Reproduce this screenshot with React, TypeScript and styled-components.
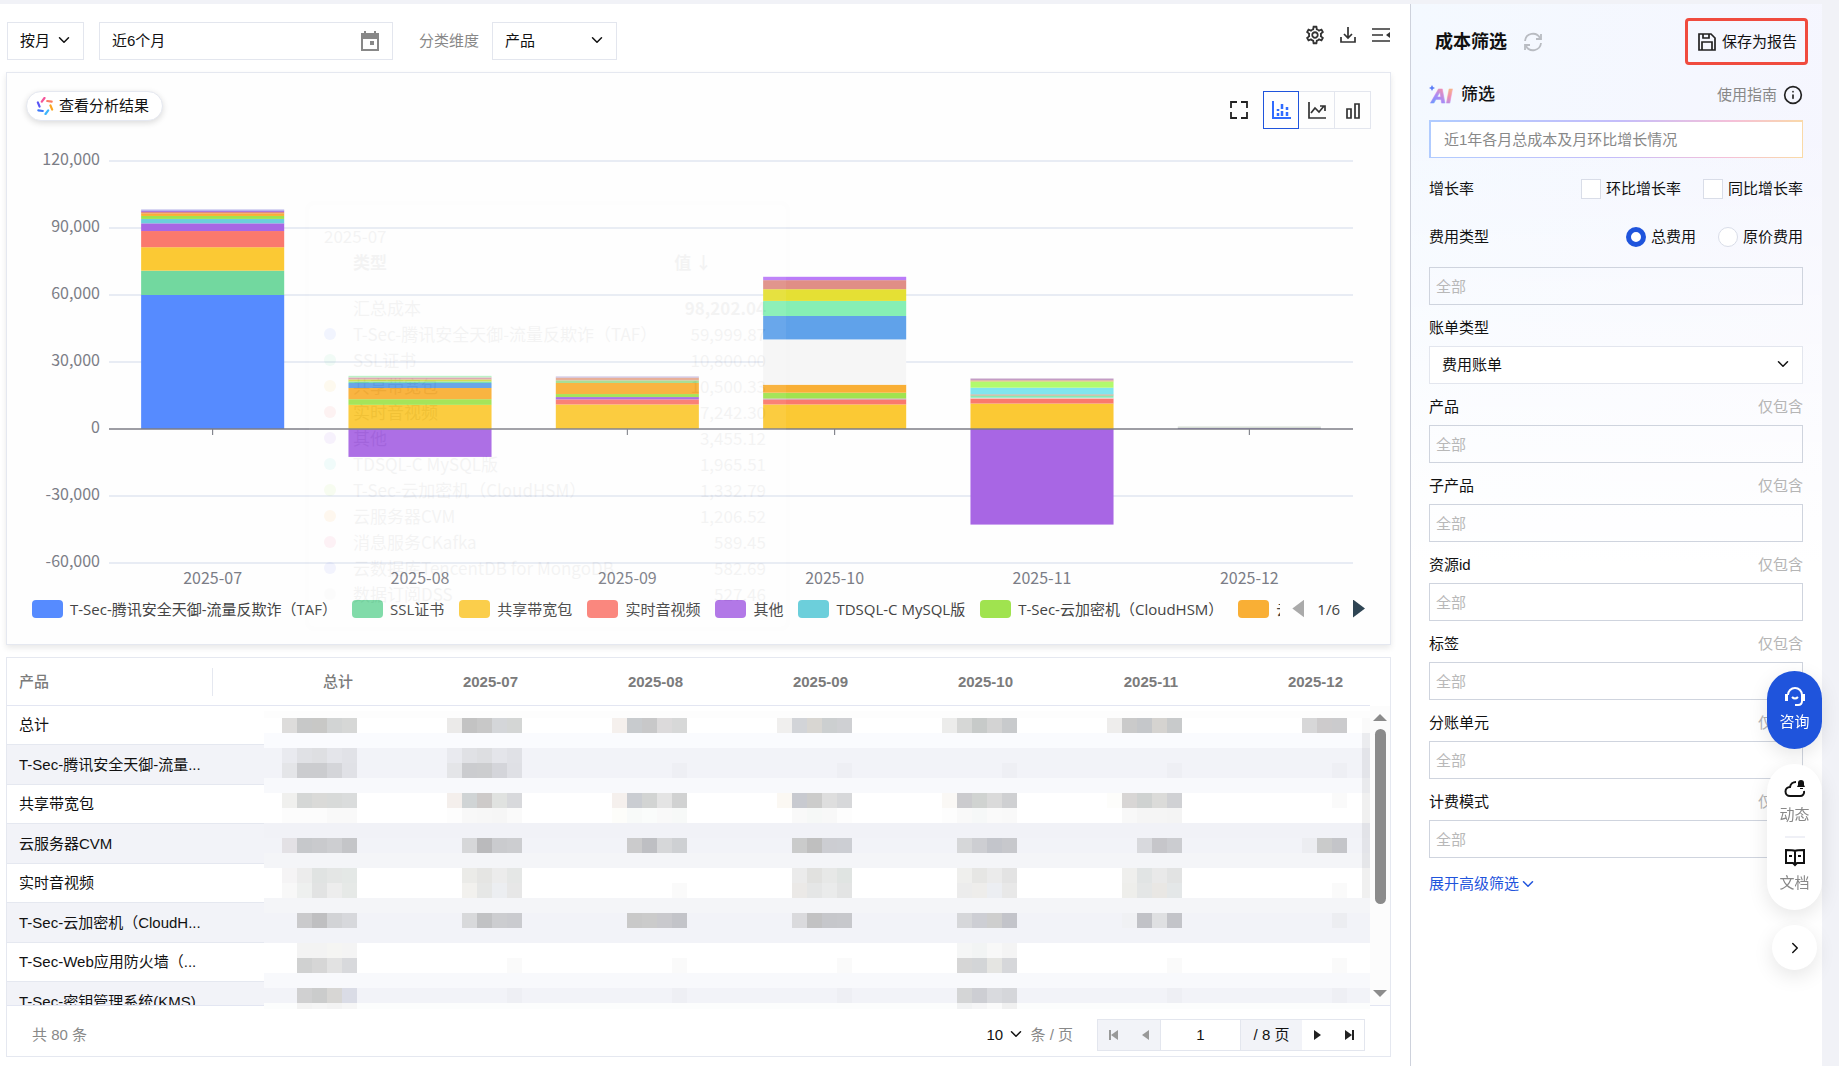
import React from "react";
import styled, { createGlobalStyle, css } from "styled-components";
import { ChevronDown, ChevronRight, Info } from "lucide-react";
import { MdOutlineSettings } from "react-icons/md";

const GlobalStyle = createGlobalStyle`
  *, *::before, *::after { box-sizing: border-box; }
  html, body { margin: 0; }
  body {
    background: #f1f2f7;
    color: #111;
    font: 15px/20px "Liberation Sans", "Noto Sans CJK SC", sans-serif;
  }
  button, input, select { font: inherit; color: inherit; margin: 0; }
  button { cursor: pointer; }
`;

const CHART_FONT = '"Noto Sans CJK SC", sans-serif';

/* ---------- page frame ---------- */

const Page = styled.div`
  display: grid;
  grid-template-columns: minmax(0, 1fr) 412px;
  min-height: 100vh;
  padding: 4px 17px 0 0;
`;

const Main = styled.main`
  display: flex;
  flex-direction: column;
  gap: 12px;
  padding: 18px 19px 10px 6px;
  background: #fff;
`;

const Toolbar = styled.div`
  display: flex;
  align-items: center;
  height: 38px;
  padding-left: 1px;
`;

const SelectBox = styled.div<{ $width?: string; $plain?: boolean }>`
  position: relative;
  width: ${(p) => p.$width ?? "100%"};
  color: #111;
  background: ${(p) => (p.$plain ? "transparent" : "#fff")};
  border: ${(p) => (p.$plain ? "0" : "1px solid #e3e6ee")};

  select {
    display: block;
    width: 100%;
    height: ${(p) => (p.$plain ? "32px" : "36px")};
    padding: 0 ${(p) => (p.$plain ? "0" : "12px")};
    border: 0;
    background: transparent;
    appearance: none;
  }
  svg {
    position: absolute;
    top: 50%;
    right: ${(p) => (p.$plain ? "0" : "10px")};
    margin-top: -10px;
    pointer-events: none;
  }
`;

const DateBox = styled.label`
  display: flex;
  align-items: center;
  width: 294px;
  height: 38px;
  margin-left: 15px;
  padding: 0 12px;
  border: 1px solid #e3e6ee;

  input {
    flex: 1;
    min-width: 0;
    padding: 0;
    border: 0;
    outline: 0;
    background: transparent;
  }
`;

const ToolbarLabel = styled.label`
  margin: 0 13px 0 26px;
  color: #888;
`;

const ToolbarActions = styled.div`
  display: flex;
  gap: 13px;
  margin: 0 0 13px auto;
`;

const IconButton = styled.button`
  display: flex;
  align-items: center;
  justify-content: center;
  width: 20px;
  height: 20px;
  padding: 0;
  border: 0;
  background: none;
  color: #333;

  svg { flex: none; }
`;

/* ---------- chart card ---------- */

const ChartCard = styled.section`
  position: relative;
  padding: 18px 0 17px;
  background: #fefefe;
  border: 1px solid #e5e8f0;
  box-shadow: 0 3px 6px rgba(0, 0, 0, 0.09);
`;

const ChartHead = styled.div`
  display: flex;
  align-items: flex-start;
  height: 39px;
  padding: 0 19px;
`;

const AnalyseButton = styled.button`
  display: flex;
  align-items: center;
  gap: 5px;
  height: 30px;
  padding: 0 13px 0 9px;
  border: 1px solid #e5e8f0;
  border-radius: 15px;
  background: #fff;
  box-shadow: 0 2px 6px rgba(0, 0, 0, 0.14);
`;

const ChartTools = styled.div`
  display: flex;
  align-items: center;
  gap: 14px;
  margin-left: auto;
`;

const ToggleGroup = styled.div`
  display: flex;
`;

const Toggle = styled.button<{ $active?: boolean }>`
  display: flex;
  align-items: center;
  justify-content: center;
  width: 36px;
  height: 38px;
  padding: 0;
  background: none;
  border: 1px solid ${(p) => (p.$active ? "#1f54dc" : "#e3e6ee")};
  border-left-width: ${(p) => (p.$active ? "1px" : "0")};
  color: ${(p) => (p.$active ? "#2f6bff" : "#333")};
`;

const Plot = styled.div`
  height: 460px;
  padding: 0 37px 0 102px;

  svg { display: block; width: 100%; height: 460px; overflow: visible; }
  text { font: 16px ${CHART_FONT}; fill: #7b7d86; }
`;

const Legend = styled.div`
  display: flex;
  align-items: center;
  height: 37px;
  padding: 0 25px;
  color: #444;
  font-family: "Open Sans", ${CHART_FONT};
`;

const LegendList = styled.ul`
  display: flex;
  flex: 1;
  gap: 15px;
  min-width: 0;
  margin: 0;
  padding: 0;
  overflow: hidden;
  list-style: none;
`;

const LegendItem = styled.li<{ $color: string }>`
  display: flex;
  flex: none;
  align-items: center;
  gap: 7px;
  white-space: nowrap;

  &::before {
    content: "";
    width: 31px;
    height: 18px;
    border-radius: 4px;
    background: ${(p) => p.$color};
  }
`;

const LegendPager = styled.div`
  display: flex;
  align-items: center;
  gap: 13px;
  margin-left: 12px;
`;

const Arrow = styled.button<{ $dir: "left" | "right"; $color: string }>`
  width: 12px;
  height: 18px;
  padding: 0;
  border: 0;
  background: ${(p) => p.$color};
  clip-path: ${(p) =>
    p.$dir === "left" ? "polygon(100% 0, 0 50%, 100% 100%)" : "polygon(0 0, 100% 50%, 0 100%)"};
`;

const Tooltip = styled.div`
  position: absolute;
  top: 132px;
  left: 302px;
  width: 477px;
  height: 422px;
  padding: 18px 20px 0 15px;
  border-radius: 5px;
  background: #fff;
  box-shadow: 0 0 4px rgba(0, 0, 0, 0.15);
  color: #555;
  font: 17px/26px ${CHART_FONT};
  opacity: 0.06;
  pointer-events: none;
  overflow: hidden;
`;

const TipHead = styled.div`
  display: flex;
  justify-content: space-between;
  height: 46px;
  padding: 0 54px 0 29px;
  font-weight: 700;
`;

const TipRow = styled.div<{ $color?: string; $strong?: boolean }>`
  display: grid;
  grid-template-columns: 12px 1fr auto;
  align-items: center;
  column-gap: 17px;
  white-space: nowrap;

  &::before {
    content: "";
    width: 12px;
    height: 12px;
    border-radius: 6px;
    background: ${(p) => p.$color ?? "transparent"};
  }
  b { font-weight: ${(p) => (p.$strong ? 700 : 400)}; }
`;

/* ---------- table card ---------- */

const TableCard = styled.section`
  border: 1px solid #e5e8f0;
  background: #fff;
`;

const ScrollArea = styled.div`
  position: relative;
  display: flex;
  height: 348px;
  border-bottom: 1px solid #e3e6f2;
`;

const TableClip = styled.div`
  flex: 1;
  min-width: 0;
  overflow: hidden;
`;

const Table = styled.table`
  width: 100%;
  table-layout: fixed;
  border-collapse: separate;
  border-spacing: 0;

  th, td { padding: 0 27px 0 0; text-align: right; }
  thead th { height: 48px; border-bottom: 1px solid #e3e6f2; color: #7b7b7b; font-weight: 700; }
  tbody tr { height: 39px; }
  tbody tr:nth-child(even) { height: 40px; background: #f2f3f8; }
  tbody th, tbody td { border-bottom: 1px solid #e5e8f0; }
  th:first-child { padding: 0 8px 0 12px; text-align: left; white-space: nowrap; }
  tbody th { font-weight: 400; overflow: hidden; }
`;

const HeadLabel = styled.span<{ $divider?: boolean }>`
  display: block;
  font-weight: 500;
  ${(p) =>
    p.$divider &&
    css`
      padding: 4px 0;
      margin-right: -6px;
      border-right: 1px solid #e5e8f0;
      line-height: 20px;
    `}
`;

const MosaicLayer = styled.svg`
  position: absolute;
  top: 53px;
  right: 20px;
  width: 1106px;
  height: 298px;
`;

const ScrollTrack = styled.div`
  display: flex;
  flex-direction: column;
  align-items: center;
  width: 20px;
  margin-top: 48px;
  padding: 8px 0;
  background: #fcfcfc;
`;

const ScrollThumb = styled.div`
  width: 11px;
  height: 175px;
  margin: 8px 0 auto;
  border-radius: 6px;
  background: #8b8b8b;
`;

const ScrollArrow = styled.div<{ $down?: boolean }>`
  width: 14px;
  height: 7px;
  background: #8b8b8b;
  clip-path: ${(p) => (p.$down ? "polygon(0 0, 100% 0, 50% 100%)" : "polygon(50% 0, 100% 100%, 0 100%)")};
`;

const TableFoot = styled.div`
  display: flex;
  align-items: center;
  height: 50px;
  padding: 8px 25px 0;
  color: #888;
`;

const PageSize = styled.label`
  display: flex;
  align-items: center;
  gap: 5px;
  margin-left: auto;
`;

const Pager = styled.div`
  display: flex;
  height: 32px;
  margin: 0 0 0 24px;
  border: 1px solid #e3e6ee;
  color: #111;

  > * + * { border-left: 1px solid #e3e6ee; }
  input {
    width: 80px;
    padding: 0;
    border-width: 0 0 0 1px;
    text-align: center;
    outline: 0;
  }
`;

const PageButton = styled.button`
  display: flex;
  align-items: center;
  justify-content: center;
  width: 31px;
  padding: 0;
  border: 0;
  background: #fff;
  color: #222;

  &:disabled { background: #f2f3f8; color: #999; }
`;

const PageTotal = styled.span`
  width: 62px;
  background: #f2f3f8;
  line-height: 30px;
  text-align: center;
`;

/* ---------- filter panel ---------- */

const Panel = styled.aside`
  padding: 14px 19px 40px 18px;
  border-left: 1px solid #ced2dc;
  background: linear-gradient(180deg, rgba(255, 255, 255, 0) 120px, #fff 560px),
    linear-gradient(100deg, #f4f9ff 0%, #f6f5fe 100%);
`;

const PanelHead = styled.div`
  display: flex;
  align-items: center;
  gap: 16px;
  height: 47px;
  margin: 0 -5px 0 6px;

  h2 { margin: 0; font-size: 18px; line-height: 24px; }
`;

const SaveButton = styled.button`
  display: flex;
  align-items: center;
  gap: 6px;
  height: 47px;
  margin-left: auto;
  padding: 0 8px 0 10px;
  border: 3px solid #f04b3e;
  border-radius: 4px;
  background: none;
`;

const AiRow = styled.div`
  display: flex;
  align-items: center;
  height: 55px;
  padding-top: 4px;

  h3 { margin: 0 auto 0 6px; font-size: 17px; font-weight: 500; }
  a { display: flex; align-items: center; gap: 6px; color: #888; text-decoration: none; }
  a svg { color: #222; }
`;

const PromptInput = styled.input`
  display: block;
  width: 100%;
  height: 38px;
  padding: 0 13px;
  border: 2px solid transparent;
  border-bottom-width: 1px;
  border-right-width: 1px;
  outline: 0;
  background: linear-gradient(#fff, #fff) padding-box,
    linear-gradient(100deg, #b0ccff, #c4bdfa 50%, #f5c0d8 80%, #fadba5) border-box;

  &::placeholder { color: #888; opacity: 1; }
`;

const OptionRow = styled.fieldset<{ $height: number }>`
  display: flex;
  align-items: center;
  gap: 22px;
  height: ${(p) => p.$height}px;
  margin: 0;
  padding: 0;
  border: 0;

  legend { float: left; margin-right: auto; padding: 0; }
  label { display: flex; align-items: center; gap: 5px; }
  input {
    width: 20px;
    height: 20px;
    appearance: none;
    border: 1px solid #d9dde8;
    background: #fff;
  }
  input[type="radio"] { border-radius: 10px; }
  input[type="radio"]:checked { border: 5px solid #1f54dc; }
`;

const FieldLabel = styled.div`
  display: flex;
  align-items: center;
  justify-content: space-between;
  height: 41px;
  padding-top: 4px;

  span { color: #b5b5b5; }
`;

const FeeField = styled.div`
  padding-top: 12px;
`;

const FilterInput = styled.input`
  display: block;
  width: 100%;
  height: 38px;
  padding: 0 6px;
  border: 1px solid #cfd4de;
  outline: 0;
  background: transparent;

  &::placeholder { color: #b8b8b8; opacity: 1; }
`;

const MoreLink = styled.a`
  display: inline-flex;
  align-items: center;
  margin-top: 16px;
  color: #1f54dc;
  text-decoration: none;
`;

/* ---------- floating help ---------- */

const Floating = styled.nav`
  position: fixed;
  top: 671px;
  right: 17px;
  display: flex;
  flex-direction: column;
  align-items: center;
  gap: 15px;
  width: 55px;
`;

const FloatGroup = styled.div<{ $primary?: boolean }>`
  width: 55px;
  padding: 14px 0 17px;
  border-radius: 28px;
  background: ${(p) => (p.$primary ? "#1f54dc" : "#fff")};
  color: ${(p) => (p.$primary ? "#fff" : "#111")};
  box-shadow: 0 6px 20px rgba(0, 0, 0, 0.1);
`;

const FloatButton = styled.button<{ $muted?: boolean }>`
  display: flex;
  flex-direction: column;
  align-items: center;
  gap: 5px;
  width: 100%;
  padding: 0;
  border: 0;
  background: none;

  span { color: ${(p) => (p.$muted ? "#888" : "#fff")}; }
`;

const FloatDivider = styled.hr`
  width: 20px;
  height: 2px;
  margin: 11px auto 8px;
  border: 0;
  background: #eff0f6;
`;

const FloatCircle = styled.button`
  display: flex;
  align-items: center;
  justify-content: center;
  width: 45px;
  height: 45px;
  padding: 0;
  border: 0;
  border-radius: 50%;
  background: #fff;
  box-shadow: 0 6px 20px rgba(0, 0, 0, 0.1);
`;

/* ---------- data ---------- */

const BLUE = "#568bff";
const GREEN = "#72d89f";
const YELLOW = "#fbc934";
const RED = "#fa796d";
const PURPLE = "#a866e4";
const TEAL = "#6ccfdb";
const LIME = "#a0e34f";
const ORANGE = "#f9af35";

type Segment = [value: number, color: string];
const MONTHS: { month: string; up: Segment[]; down?: number }[] = [
  {
    month: "2025-07",
    up: [
      [60000, BLUE], [10900, GREEN], [10500, YELLOW], [7242, RED], [3455, PURPLE], [1965, TEAL],
      [1333, LIME], [1206, ORANGE], [589, "#e08a80"], [582, "#a872dc"], [480, "#a9a4e6"],
    ],
  },
  {
    month: "2025-08",
    up: [
      [10800, YELLOW], [2550, LIME], [5000, ORANGE], [2250, "#60a0e8"], [700, "#72dcb0"],
      [900, "#d0dc4a"], [900, "#dca3ae"], [700, "#b8f2c4"],
    ],
    down: 12500,
  },
  {
    month: "2025-09",
    up: [
      [11000, YELLOW], [2250, RED], [1050, PURPLE], [1350, LIME], [4950, ORANGE],
      [1200, "#a3dc90"], [1200, "#e6aa92"], [500, "#c5b8dc"],
    ],
  },
  {
    month: "2025-10",
    up: [
      [11000, YELLOW], [2250, RED], [400, "#b59ab8"], [2600, LIME], [3600, ORANGE],
      [20250, "#f6f6f6"], [10500, "#60a2ea"], [6750, "#86efb4"], [5250, "#e5e034"],
      [4050, "#e08e86"], [1500, "#bb7cf8"],
    ],
  },
  {
    month: "2025-11",
    up: [
      [11400, YELLOW], [2300, RED], [300, "#e8ecee"], [1000, "#88e8b8"], [500, "#d39a7c"],
      [3000, "#80e5ee"], [2800, "#b2fa6c"], [500, "#e0b070"], [800, "#c39cc4"],
    ],
    down: 42800,
  },
  { month: "2025-12", up: [[500, "#a18fd0"], [600, "#d2dad0"]] },
];

const LEGEND: [string, string][] = [
  ["T-Sec-腾讯安全天御-流量反欺诈（TAF）", BLUE],
  ["SSL证书", "#79d9a4"],
  ["共享带宽包", "#fbcb3f"],
  ["实时音视频", "#fa8076"],
  ["其他", "#ad70e6"],
  ["TDSQL-C MySQL版", TEAL],
  ["T-Sec-云加密机（CloudHSM）", LIME],
  ["云服务器CVM", ORANGE],
];

const TIP_ROWS: [string, string, string][] = [
  ["T-Sec-腾讯安全天御-流量反欺诈（TAF）", "59,999.87", "#2f6bff"],
  ["SSL证书", "10,800.00", "#38d080"],
  ["共享带宽包", "10,500.33", "#fbb000"],
  ["实时音视频", "7,242.30", "#fa4040"],
  ["其他", "3,455.12", "#8a30e0"],
  ["TDSQL-C MySQL版", "1,965.51", "#20d0c0"],
  ["T-Sec-云加密机（CloudHSM）", "1,332.79", "#90e020"],
  ["云服务器CVM", "1,206.52", "#ff9a00"],
  ["消息服务CKafka", "589.45", "#f03070"],
  ["云数据库TencentDB for MongoDB", "582.69", "#4050f0"],
  ["数据订阅DSS", "527.46", "#dddddd"],
];

const COLUMNS = ["总计", "2025-07", "2025-08", "2025-09", "2025-10", "2025-11", "2025-12"];
const PRODUCTS = [
  "总计",
  "T-Sec-腾讯安全天御-流量...",
  "共享带宽包",
  "云服务器CVM",
  "实时音视频",
  "T-Sec-云加密机（CloudH...",
  "T-Sec-Web应用防火墙（...",
  "T-Sec-密钥管理系统(KMS)",
];

const FILTERS = ["产品", "子产品", "资源id", "标签", "分账单元", "计费模式"];

/* Masked amounts: background bands, then five 15px tiles per column. */
const BANDS: [y: number, height: number, color: string][] = [
  [0, 7, "#fdfdfd"], [7, 15, "#ffffff"], [22, 15, "#fafbfe"], [37, 30, "#f2f3f8"],
  [67, 15, "#f8f9fc"], [82, 30, "#ffffff"], [112, 15, "#f1f2f7"], [127, 15, "#f2f3f8"],
  [142, 15, "#f4f5f8"], [157, 30, "#ffffff"], [187, 15, "#f4f5f8"], [202, 30, "#f2f3f8"],
  [232, 30, "#ffffff"], [262, 15, "#f8f9fc"], [277, 15, "#f2f3f8"], [292, 6, "#fcfdfd"],
];

const TILES: [y: number, columns: string[]][] = [
  [7, [
    "dddcdb c7c8c8 c8c8c6 d2d4d4 d6d7d6", "ebeae9 c3c3c3 c8c8c8 d4d6d9 d4d6d5",
    "f5f0ed c8cbce c8c8c9 dcdadb d7d8d8", "f0efee d2d4d8 d8d6d2 cccfd0 cfd0d3",
    "ececeb d6d7d6 c7cac9 d3d3d3 c8cacc", "eeedec cacaca c5c7ca d5d3d0 c8cacb",
    "- - d7d7d8 cdcbcc cbcbcd",
  ]],
  [37, ["e9eaef e0e1e5 dedfe2 e4e5ea e1e2e7", "e9eaef e0e1e5 dddee1 e4e5ea e0e1e6"]],
  [52, [
    "e4e5e8 cbcccf cbcccf d4d5d9 e0e1e6", "e4e5e8 cbcccf cccdcf d4d5da dfe0e5",
    "- - - - eeeff4", "- - - - eeeff4", "- - - - eeeff4", "- - - - eeeff4", "- - - - eeeff4",
  ]],
  [82, [
    "f0f0ee d5d7d6 dadad8 d8dad9 dadcdc", "f4efec d0d4d5 cdcac9 e0e2e0 d8d9dc",
    "f5f0ed cacdd2 d2d4d3 e4e4e4 d1d2d2", "fbf8f3 c8cad0 cccccb dedede d7d8da",
    "faf8f5 cbcbce d0d3d1 dadada cfd0d2", "fdfdfb d8d6d5 cfd2d1 dbdbd9 d0d1d4",
    "- - - - fafafa",
  ]],
  [97, [
    "fcfcfc fcfcfc fcfcfc f9f9f9 f9f9f9", "fdfdfd f8f8f8 f7f7f7 f6f6f6 fafafa",
    "fdfdfa f8faf9 fafcfb f9f9f9 f7f9f8", "- f9f9f9 f6f8f7 f8f8f8 fdfdfd",
    "fdfdfd f9f9f9 f6f8f8 fafafa f9f9f9", "- f8f8f8 f5f5f5 f5f5f5 f4f4f4",
  ]],
  [127, [
    "e3e1e5 c6c8cb c9cacd cdced1 c4c5c8", "- d6d7d9 bababc cacbce cccdd0",
    "- cbcbcc bebfc3 d6d7d9 ced0d3", "- cacbcb bfbfbf cccdd2 ccced3",
    "- d6d7d9 cdced2 c3c5cb c7c8cc", "- - d8d9dd c6c6ca cbccd0", "- - ecedf1 cacbcb c4c5c9",
  ]],
  [157, [
    "f5f4f5 ececec e0e3e2 e4e6e5 e4e8e6", "- ebebe8 e5e5e3 ececec e5e7e6", "",
    "- ebebeb e1e1df e7e8e7 e0e4e2", "- efefed e6e6e4 ebebeb e3e3e3", "- efefed e1e4e4 e9e9e9 e2e3e3",
  ]],
  [172, [
    "f8f8f8 eef0ef e2e3e3 ededed e6e9e7", "- f2f1ee e6e7e6 eceef1 e7e7e7", "- - - - fafafa",
    "- ebe9e7 e5e6e6 eaebeb e3e4e4", "- ececec eeedeb eceef2 e8e8e8", "- eeeeeb e4e6e6 e9e7e4 e4e7e8",
    "- - - - fafafa",
  ]],
  [202, [
    "- cacacc bfbfc1 d2d3d6 d7d8dc", "- d8d9db c1c2c4 cccdd0 cacbcf", "- c9c9c9 cbcbcb c9c9cd c3c4c9",
    "- dadadd c2c2c3 c6c7cb c7c8cc", "- d6d7da cdced4 cecece c3c4ca", "- f0f1f4 c1c2c7 dfe0e2 c3c4c9",
    "- - - - ecedf1",
  ]],
  [232, ["- f3f3f3 f3f3f3 f5f5f3 f4f4f4", "", "", "", "- f5f6f6 f2f4f4 f8f8f8 f4f4f4"]],
  [247, [
    "- d0d1d1 d6d6d6 e2e2e2 d8d9dc", "- - - - fafafa", "- - - - fafafa", "- - - - fafafa",
    "- d6d6d6 d3d5d7 e5e5e2 d6d7da", "- - - - fafafa", "- - - - fafafa",
  ]],
  [277, [
    "- d0d0d1 cbcccc d7d6d4 dadce6", "- - - - eeeff4", "- - - - eeeff4", "- - - - eeeff4",
    "- d4d5d6 cdced3 d9dade d5d6da", "- - - - eeeff4", "- - - - eeeff4",
  ]],
  [292, ["- f3f3f3 f5f5f5 f3f3f3 f6f6f6", "", "", "", "- f1f2f3 f5f5f6 fafafa f0f0f0"]],
];

/* ---------- drawings ---------- */

const CalendarIcon = () => (
  <svg width="20" height="24" viewBox="0 0 20 24" fill="none" aria-hidden="true">
    <path d="M2 5h16v16H2z" stroke="#888" strokeWidth="2" />
    <path d="M1 4h18v6H1z" fill="#888" />
    <path d="M5 2v3M15 2v3" stroke="#888" strokeWidth="2" />
    <path d="M10 12h4v4h-4z" fill="#888" />
  </svg>
);

const DownloadIcon = () => (
  <svg width="18" height="18" viewBox="0 0 18 18" fill="none" stroke="currentColor" strokeWidth="1.700" aria-hidden="true">
    <path d="M9 1v11M5 8l4 4 4-4M2 11v5h14v-5" />
  </svg>
);

const CollapseIcon = () => (
  <svg width="18" height="18" viewBox="0 0 18 18" fill="none" stroke="currentColor" strokeWidth="1.700" aria-hidden="true">
    <path d="M0 3h18M0 9h11M0 15h18" />
    <path d="M18 6v6l-4-3z" fill="currentColor" stroke="none" />
  </svg>
);

const ExpandIcon = () => (
  <svg width="18" height="18" viewBox="0 0 18 18" fill="none" stroke="#222" strokeWidth="1.800" aria-hidden="true">
    <path d="M1 7V1h6M11 1h6v6M17 11v6h-6M7 17H1v-6" />
  </svg>
);

const StackedIcon = () => (
  <svg width="19" height="19" viewBox="0 0 19 19" fill="none" stroke="currentColor" strokeWidth="2" aria-hidden="true">
    <path d="M1 0v17h18" />
    <path d="M6 8v2M6 12v3M10 3v5M10 10v5M15 6v3M15 11v4" strokeWidth="2.500" />
  </svg>
);

const TrendIcon = () => (
  <svg width="18" height="18" viewBox="0 0 18 18" fill="none" stroke="currentColor" strokeWidth="1.700" aria-hidden="true">
    <path d="M1 1v16h17M3 12l4-5 4 4 5-6M12 5h5v5" />
  </svg>
);

const ColumnsIcon = () => (
  <svg width="16" height="18" viewBox="0 0 16 18" fill="none" stroke="currentColor" strokeWidth="1.700" aria-hidden="true">
    <path d="M2 8h4v9H2zM10 3h4v14h-4z" />
  </svg>
);

const SparkIcon = () => {
  const strokes = ["#f5559b", "#fb7c63", "#fca51f", "#3fb6fb", "#3b78fb", "#5a55f5"];
  return (
    <svg width="18" height="18" viewBox="-9 -9 18 18" aria-hidden="true">
      {strokes.map((stroke, i) => (
        <path
          key={stroke}
          d="M-3.200-4.400L-0.500-8"
          transform={`rotate(${i * 60})`}
          stroke={stroke}
          strokeWidth="2.200"
          strokeLinecap="round"
        />
      ))}
    </svg>
  );
};

const RefreshIcon = () => (
  <svg width="20" height="20" viewBox="0 0 20 20" fill="none" stroke="#b9bcc2" strokeWidth="1.800" aria-hidden="true">
    <path d="M2 9a8 8 0 0 1 15-3M18 11a8 8 0 0 1-15 3" />
    <path d="M18 2v5h-5M2 18v-5h5" />
  </svg>
);

const SaveIcon = () => (
  <svg width="18" height="18" viewBox="0 0 18 18" fill="none" stroke="#222" strokeWidth="1.700" aria-hidden="true">
    <path d="M1 1h12l4 4v12H1zM5 1v4h6V1M4 17V9h10v8" />
  </svg>
);

const AiLogo = () => (
  <svg width="26" height="22" viewBox="0 0 26 22" role="img" aria-label="AI">
    <defs>
      <linearGradient id="ai-tint" x1="0" y1="1" x2="1" y2="0">
        <stop offset="0" stopColor="#5a9aff" />
        <stop offset="0.400" stopColor="#a98bf5" />
        <stop offset="0.650" stopColor="#f08fae" />
        <stop offset="1" stopColor="#fbd06a" />
      </linearGradient>
    </defs>
    <path d="M3 1l1 2 2 1-2 1-1 2-1-2-2-1 2-1z" fill="#5a7cf8" />
    <text
      x="2"
      y="19"
      fill="url(#ai-tint)"
      stroke="url(#ai-tint)"
      strokeWidth="0.700"
      fontFamily="Liberation Sans, sans-serif"
      fontSize="21"
      fontStyle="italic"
      fontWeight="700"
    >
      AI
    </text>
  </svg>
);

const HeadsetIcon = () => (
  <svg width="22" height="22" viewBox="0 0 22 22" fill="none" stroke="currentColor" strokeWidth="2" aria-hidden="true">
    <path d="M4 10a7 7 0 0 1 14 0v6c0 3-2 4-4 4h-3" />
    <path d="M2.500 9v7M19.500 9v7" strokeWidth="3" />
    <path d="M8 12q3 3 6 0" />
  </svg>
);

const CloudBellIcon = () => (
  <svg width="22" height="22" viewBox="0 0 22 22" fill="none" stroke="currentColor" strokeWidth="2" aria-hidden="true">
    <path d="M12 4a6 6 0 0 0-6 5 4 4 0 0 0 0 9h10a4 4 0 0 0 4-5" />
    <path d="M13 9h8l-1-2V5a3 3 0 0 0-6 0v2zM16 10h3v1h-3z" fill="currentColor" stroke="none" />
  </svg>
);

const BookIcon = () => (
  <svg width="22" height="22" viewBox="0 0 22 22" fill="none" stroke="currentColor" strokeWidth="2" aria-hidden="true">
    <path d="M11 5c-2-1-5-1-9-1v13h7l2 2 2-2h7V4c-4 0-7 0-9 1zM11 5v13M5 10h3M14 10h3" />
  </svg>
);

const StepIcon = ({ dir, bar }: { dir: "left" | "right"; bar?: boolean }) => (
  <svg
    width="10"
    height="10"
    viewBox="0 0 10 10"
    fill="currentColor"
    transform={dir === "left" ? "scale(-1 1)" : undefined}
    aria-hidden="true"
  >
    <path d="M1 0v10l7-5z" />
    {bar && <path d="M8 0h2v10H8z" />}
  </svg>
);

/* ---------- chart ---------- */

const ZERO_Y = 299;
const PX_PER_UNIT = 67 / 30000;
const TICKS = [120000, 90000, 60000, 30000, 0, -30000, -60000];
const BAND = 100 / MONTHS.length;

function CostChart() {
  return (
    <svg role="img" aria-label="近6个月成本">
      {TICKS.map((tick) => {
        const y = ZERO_Y - tick * PX_PER_UNIT;
        return (
          <g key={tick}>
            {tick !== 0 && <line x1="0" x2="100%" y1={y} y2={y} stroke="#e0e6f1" strokeWidth="1.500" />}
            <text x="-9" y={y + 4} textAnchor="end">
              {tick.toLocaleString("en-US")}
            </text>
          </g>
        );
      })}
      {MONTHS.map(({ month, up, down }, i) => {
        const x = `${BAND * (i + 0.155)}%`;
        const width = `${BAND * 0.69}%`;
        const middle = `${BAND * (i + 0.5)}%`;
        let top = ZERO_Y;
        return (
          <g key={month}>
            <line x1={middle} x2={middle} y1={ZERO_Y} y2={ZERO_Y + 6} stroke="#6e7079" />
            {up.map(([value, color], k) => {
              const height = value * PX_PER_UNIT;
              top -= height;
              return <rect key={k} x={x} y={top} width={width} height={height} fill={color} />;
            })}
            {down && <rect x={x} y={ZERO_Y} width={width} height={down * PX_PER_UNIT} fill={PURPLE} />}
            <text x={middle} y="454" textAnchor="middle">
              {month}
            </text>
          </g>
        );
      })}
      <line x1="0" x2="100%" y1={ZERO_Y} y2={ZERO_Y} stroke="#7c7d86" strokeWidth="1.500" />
    </svg>
  );
}

function Mosaic() {
  return (
    <MosaicLayer aria-hidden="true" shapeRendering="crispEdges">
      {BANDS.map(([y, height, color]) => (
        <rect key={y} x="0" y={y} width="1106" height={height} fill={color} />
      ))}
      {TILES.map(([y, columns]) =>
        columns.map((tiles, c) =>
          tiles.split(" ").map((tile, s) =>
            tile.length === 6 ? (
              <rect
                key={`${y}-${c}-${s}`}
                x={18 + c * 165 + s * 15}
                y={y}
                width="15"
                height={y === 292 ? 6 : 15}
                fill={`#${tile}`}
              />
            ) : null
          )
        )
      )}
      <rect x="1098" y="7" width="8" height="15" fill="#000" opacity="0.020" />
      <rect x="1098" y="22" width="8" height="165" fill="#000" opacity="0.060" />
    </MosaicLayer>
  );
}

/* ---------- page ---------- */

export default function App() {
  return (
    <>
      <GlobalStyle />
      <Page>
        <Main>
          <Toolbar>
            <SelectBox $width="77px">
              <select aria-label="时间粒度">
                <option>按月</option>
              </select>
              <ChevronDown size={18} />
            </SelectBox>
            <DateBox>
              <input aria-label="时间范围" defaultValue="近6个月" />
              <CalendarIcon />
            </DateBox>
            <ToolbarLabel htmlFor="dimension">分类维度</ToolbarLabel>
            <SelectBox $width="125px">
              <select id="dimension">
                <option>产品</option>
              </select>
              <ChevronDown size={18} />
            </SelectBox>
            <ToolbarActions>
              <IconButton aria-label="设置">
                <MdOutlineSettings size={22} />
              </IconButton>
              <IconButton aria-label="下载">
                <DownloadIcon />
              </IconButton>
              <IconButton aria-label="收起">
                <CollapseIcon />
              </IconButton>
            </ToolbarActions>
          </Toolbar>

          <ChartCard>
            <ChartHead>
              <AnalyseButton>
                <SparkIcon />
                查看分析结果
              </AnalyseButton>
              <ChartTools>
                <IconButton aria-label="全屏">
                  <ExpandIcon />
                </IconButton>
                <ToggleGroup>
                  <Toggle $active aria-label="堆积图">
                    <StackedIcon />
                  </Toggle>
                  <Toggle aria-label="折线图">
                    <TrendIcon />
                  </Toggle>
                  <Toggle aria-label="柱状图">
                    <ColumnsIcon />
                  </Toggle>
                </ToggleGroup>
              </ChartTools>
            </ChartHead>
            <Plot>
              <CostChart />
            </Plot>
            <Legend>
              <LegendList>
                {LEGEND.map(([name, color]) => (
                  <LegendItem key={name} $color={color}>
                    {name}
                  </LegendItem>
                ))}
              </LegendList>
              <LegendPager>
                <Arrow $dir="left" $color="#aaa" aria-label="上一页图例" />
                1/6
                <Arrow $dir="right" $color="#2f4554" aria-label="下一页图例" />
              </LegendPager>
            </Legend>
            <Tooltip>
              <div>2025-07</div>
              <TipHead>
                <span>类型</span>
                <span>值 ↓</span>
              </TipHead>
              <TipRow $strong>
                汇总成本<b>98,202.04</b>
              </TipRow>
              {TIP_ROWS.map(([name, value, color]) => (
                <TipRow key={name} $color={color}>
                  {name}
                  <b>{value}</b>
                </TipRow>
              ))}
            </Tooltip>
          </ChartCard>

          <TableCard>
            <ScrollArea>
              <TableClip>
                <Table>
                  <colgroup>
                    <col />
                    {COLUMNS.map((name) => (
                      <col key={name} width="165" />
                    ))}
                  </colgroup>
                  <thead>
                    <tr>
                      <th scope="col">
                        <HeadLabel $divider>产品</HeadLabel>
                      </th>
                      {COLUMNS.map((name, i) => (
                        <th key={name} scope="col">
                          {i === 0 ? <HeadLabel>{name}</HeadLabel> : name}
                        </th>
                      ))}
                    </tr>
                  </thead>
                  <tbody>
                    {PRODUCTS.map((name) => (
                      <tr key={name}>
                        <th scope="row">{name}</th>
                        {COLUMNS.map((column) => (
                          <td key={column} />
                        ))}
                      </tr>
                    ))}
                  </tbody>
                </Table>
              </TableClip>
              <ScrollTrack>
                <ScrollArrow />
                <ScrollThumb />
                <ScrollArrow $down />
              </ScrollTrack>
              <Mosaic />
            </ScrollArea>
            <TableFoot>
              <span>共 80 条</span>
              <PageSize>
                <SelectBox $plain $width="39px">
                  <select aria-label="每页条数">
                    <option>10</option>
                  </select>
                  <ChevronDown size={18} />
                </SelectBox>
                条 / 页
              </PageSize>
              <Pager>
                <PageButton disabled aria-label="首页">
                  <StepIcon dir="left" bar />
                </PageButton>
                <PageButton disabled aria-label="上一页">
                  <StepIcon dir="left" />
                </PageButton>
                <input aria-label="页码" defaultValue="1" />
                <PageTotal>/ 8 页</PageTotal>
                <PageButton aria-label="下一页">
                  <StepIcon dir="right" />
                </PageButton>
                <PageButton aria-label="末页">
                  <StepIcon dir="right" bar />
                </PageButton>
              </Pager>
            </TableFoot>
          </TableCard>
        </Main>

        <Panel>
          <PanelHead>
            <h2>成本筛选</h2>
            <IconButton aria-label="刷新">
              <RefreshIcon />
            </IconButton>
            <SaveButton>
              <SaveIcon />
              保存为报告
            </SaveButton>
          </PanelHead>
          <AiRow>
            <AiLogo />
            <h3>筛选</h3>
            <a href="#guide">
              使用指南
              <Info size={20} />
            </a>
          </AiRow>
          <PromptInput aria-label="AI 筛选" placeholder="近1年各月总成本及月环比增长情况" />
          <OptionRow $height={61}>
            <legend>增长率</legend>
            <label>
              <input type="checkbox" />
              环比增长率
            </label>
            <label>
              <input type="checkbox" />
              同比增长率
            </label>
          </OptionRow>
          <OptionRow $height={36}>
            <legend>费用类型</legend>
            <label>
              <input type="radio" name="fee" defaultChecked />
              总费用
            </label>
            <label>
              <input type="radio" name="fee" />
              原价费用
            </label>
          </OptionRow>
          <FeeField>
            <FilterInput aria-label="费用类型" placeholder="全部" />
          </FeeField>
          <FieldLabel as="label" htmlFor="bill">
            账单类型
          </FieldLabel>
          <SelectBox>
            <select id="bill">
              <option>费用账单</option>
            </select>
            <ChevronDown size={18} />
          </SelectBox>
          {FILTERS.map((name) => (
            <div key={name}>
              <FieldLabel>
                <label htmlFor={`filter-${name}`}>{name}</label>
                <span>仅包含</span>
              </FieldLabel>
              <FilterInput id={`filter-${name}`} placeholder="全部" />
            </div>
          ))}
          <MoreLink href="#advanced">
            展开高级筛选
            <ChevronDown size={18} />
          </MoreLink>
        </Panel>
      </Page>

      <Floating>
        <FloatGroup $primary>
          <FloatButton>
            <HeadsetIcon />
            <span>咨询</span>
          </FloatButton>
        </FloatGroup>
        <FloatGroup>
          <FloatButton $muted>
            <CloudBellIcon />
            <span>动态</span>
          </FloatButton>
          <FloatDivider />
          <FloatButton $muted>
            <BookIcon />
            <span>文档</span>
          </FloatButton>
        </FloatGroup>
        <FloatCircle aria-label="收起">
          <ChevronRight size={18} />
        </FloatCircle>
      </Floating>
    </>
  );
}
